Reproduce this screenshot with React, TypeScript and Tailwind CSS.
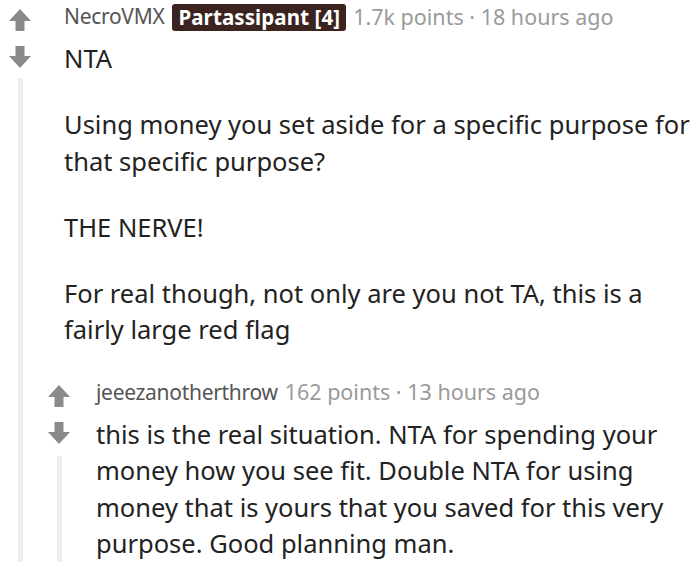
import React from "react";

const Arrow = ({ down = false }: { down?: boolean }) => (
  <svg width="24" height="24" viewBox="0 0 24 24" className={down ? "rotate-180" : ""}>
    <path d="M12 1 L23 13 L16.5 13 L16.5 23 L7.5 23 L7.5 13 L1 13 Z" fill="#8a8a8a" />
  </svg>
);

interface CommentProps {
  author: string;
  flair?: string;
  points: string;
  time: string;
  paragraphs: string[];
  nested?: boolean;
  children?: React.ReactNode;
}

const Comment: React.FC<CommentProps> = ({ author, flair, points, time, paragraphs, nested, children }) => {
  return (
    <div className="flex">
      <div className="flex w-6 flex-col items-center pt-[8px]">
        <Arrow />
        <div className="mt-[13px]">
          <Arrow down />
        </div>
        <div className={`${nested ? "mt-[11px]" : "mt-[9px]"} w-[5px] flex-1 bg-[#ededed]`} />
      </div>
      <div className={`${nested ? "ml-[25px]" : "ml-8"} flex-1`}>
        <div className="flex h-[34px] items-center whitespace-nowrap font-['Noto_Sans',sans-serif] text-[21.5px]">
          <span className="text-[21px] tracking-[-0.3px] text-[#555]">{author}</span>
          {flair && (
            <span className="ml-[8px] rounded-[3px] bg-[#3b2420] px-[6px] py-[1px] text-[20.5px] font-bold leading-[25px] tracking-[0.1px] text-white">
              {flair}
            </span>
          )}
          <span className="ml-[7px] text-[#9a9a9a]">
            {points} · {time}
          </span>
        </div>
        <div className="mt-[6px] font-['Noto_Sans',sans-serif] text-[25.5px] leading-[36.5px] text-[#222]">
          {paragraphs.map((p, i) => (
            <p key={i} className={i > 0 ? "mt-[29.5px]" : ""}>
              {p}
            </p>
          ))}
        </div>
        {children}
      </div>
    </div>
  );
};

export default function App() {
  return (
    <div className="h-[578px] w-[700px] overflow-hidden bg-white pl-[8px] pr-[4px]">
      <Comment
        author="NecroVMX"
        flair="Partassipant [4]"
        points="1.7k points"
        time="18 hours ago"
        paragraphs={[
          "NTA",
          "Using money you set aside for a specific purpose for that specific purpose?",
          "THE NERVE!",
          "For real though, not only are you not TA, this is a fairly large red flag",
        ]}
      >
        <div className="-ml-[17px] mt-[28px]">
          <Comment
            nested
            author="jeeezanotherthrow"
            points="162 points"
            time="13 hours ago"
            paragraphs={[
              "this is the real situation. NTA for spending your money how you see fit. Double NTA for using money that is yours that you saved for this very purpose. Good planning man.",
            ]}
          />
        </div>
      </Comment>
    </div>
  );
}
